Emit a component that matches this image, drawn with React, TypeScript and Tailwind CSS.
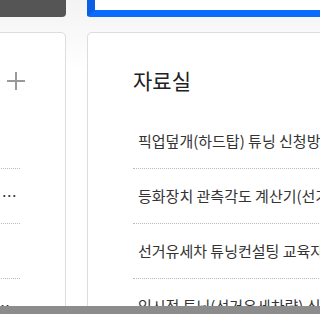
const notices = [
  { title: "튜닝 승인 안내", long: false },
  { title: "자동차 튜닝 승인 신청 절차 및 구비서류 안내 공지사항", long: true },
  { title: "튜닝 검사 안내", long: false },
  { title: "구조변경 검사 대행 업무 처리지침 개정 안내 공지사항입니다", long: true },
];

const files = [
  "픽업덮개(하드탑) 튜닝 신청방법 안내",
  "등화장치 관측각도 계산기(선거유세차량)",
  "선거유세차 튜닝컨설팅 교육자료",
  "임시적 튜닝(선거유세차량) 신청방법",
];

export default function App() {
  return (
    <div
      className="relative h-[314px] w-[320px] overflow-hidden bg-[linear-gradient(#f3f3f3,#ffffff_70px)] text-[#222]"
      style={{ fontFamily: '"Noto Sans CJK KR", "Noto Sans", sans-serif' }}
    >
      {/* top bar */}
      <div className="flex h-[17px] gap-[21px]">
        <div className="w-[66px] rounded-br-[4px] bg-[#555555]" />
        <div className="flex-1 rounded-bl-[3px] border-b-[7px] border-l-[8px] border-b-[#0a6cff] border-l-[#0a5fe6] bg-white" />
      </div>

      {/* cards */}
      <div className="mt-[15px] flex gap-[21px]">
        {/* 공지사항 (left, mostly offscreen) */}
        <div className="-ml-[235px] w-[301px] shrink-0 rounded-[5px] border border-[#dddddd] bg-white px-[45px] pt-[30px]">
          <div className="flex h-[36px] items-center justify-between">
            <span className="text-[21px]">공지사항</span>
            <svg
              width="20"
              height="20"
              viewBox="0 0 20 20"
              className="-mr-[6px] text-[#999999]"
              fill="none"
              stroke="currentColor"
              strokeWidth="2"
            >
              <path d="M10 1v18M1 10h18" />
            </svg>
          </div>
          <ul className="mt-[15px]">
            {notices.map((n) => (
              <li
                key={n.title}
                className="flex h-[55px] items-center border-b border-dotted border-[#bbbbbb] pl-[5px] pr-[3px] text-[15px] text-[#333]"
              >
                <span className="truncate">{n.title}</span>
              </li>
            ))}
          </ul>
        </div>

        {/* 자료실 */}
        <div className="w-[400px] shrink-0 rounded-[5px] border border-[#dddddd] bg-white px-[45px] pt-[30px]">
          <div className="flex h-[36px] items-center">
            <span className="text-[21px]">자료실</span>
          </div>
          <ul className="mt-[15px]">
            {files.map((f) => (
              <li
                key={f}
                className="flex h-[55px] items-center whitespace-nowrap border-b border-dotted border-[#bbbbbb] pl-[5px] text-[15px] text-[#333]"
              >
                {f}
              </li>
            ))}
          </ul>
        </div>
      </div>

      {/* bottom scroll strip */}
      <div className="absolute bottom-0 left-0 h-[8px] w-full bg-[#8c8c8c]" />
    </div>
  );
}
